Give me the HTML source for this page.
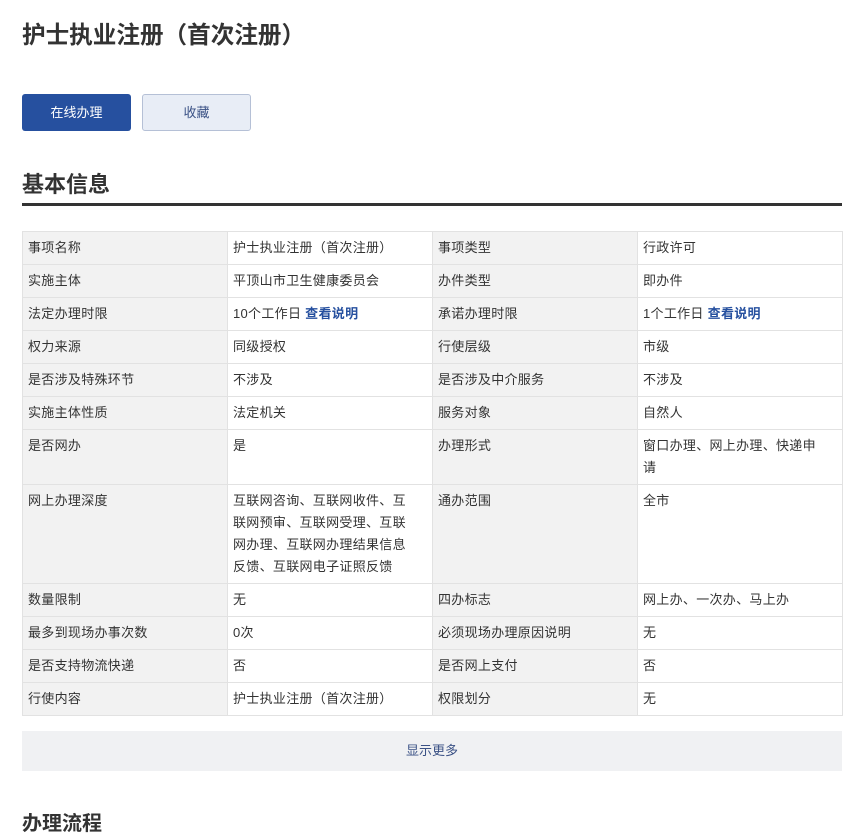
<!DOCTYPE html>
<html><head><meta charset="utf-8"><style>
body{margin:0;background:#fff;font-family:"Liberation Sans","Noto Sans CJK SC",sans-serif;color:#333;width:868px;height:814px;overflow:hidden;position:relative}
h1{position:absolute;left:22px;top:19px;margin:0;font-size:23.6px;font-weight:bold;color:#333;line-height:34px}
.btn{position:absolute;top:94px;height:37px;width:109px;box-sizing:border-box;border-radius:3px;font-size:13px;text-align:center;line-height:37px}
.b1{left:22px;background:#26509f;color:#fff}
.b2{left:142px;background:#e8edf6;border:1px solid #b5c0d6;color:#3a5185;line-height:35px}
h2{position:absolute;left:22px;top:168px;margin:0;font-size:22px;font-weight:bold;line-height:34px;color:#333}
.line{position:absolute;left:22px;top:203px;width:820px;height:3px;background:#333}
table{position:absolute;left:22px;top:231px;width:820px;border-collapse:collapse;table-layout:fixed;font-size:13px;letter-spacing:0.3px}
td{border:1px solid #e2e2e2;padding:5px 20px 5px 5px;line-height:22px;vertical-align:top;color:#333}
td.l{background:#f2f2f2}
a{color:#26509f;font-weight:bold;text-decoration:none}
.more{position:absolute;left:22px;top:731px;width:820px;height:40px;background:#f0f1f3;text-align:center;line-height:40px;font-size:13px;color:#3a5185}
.h3{position:absolute;left:22px;top:812px;font-size:20px;font-weight:bold;color:#333;line-height:24px}
</style></head><body>
<h1>护士执业注册（首次注册）</h1>
<div class="btn b1">在线办理</div>
<div class="btn b2">收藏</div>
<h2>基本信息</h2>
<div class="line"></div>
<table>
<colgroup><col style="width:205px"><col style="width:205px"><col style="width:205px"><col style="width:205px"></colgroup>
<tr><td class="l">事项名称</td><td>护士执业注册（首次注册）</td><td class="l">事项类型</td><td>行政许可</td></tr>
<tr><td class="l">实施主体</td><td>平顶山市卫生健康委员会</td><td class="l">办件类型</td><td>即办件</td></tr>
<tr><td class="l">法定办理时限</td><td>10个工作日 <a>查看说明</a></td><td class="l">承诺办理时限</td><td>1个工作日 <a>查看说明</a></td></tr>
<tr><td class="l">权力来源</td><td>同级授权</td><td class="l">行使层级</td><td>市级</td></tr>
<tr><td class="l">是否涉及特殊环节</td><td>不涉及</td><td class="l">是否涉及中介服务</td><td>不涉及</td></tr>
<tr><td class="l">实施主体性质</td><td>法定机关</td><td class="l">服务对象</td><td>自然人</td></tr>
<tr><td class="l">是否网办</td><td>是</td><td class="l">办理形式</td><td>窗口办理、网上办理、快递申请</td></tr>
<tr><td class="l">网上办理深度</td><td>互联网咨询、互联网收件、互联网预审、互联网受理、互联网办理、互联网办理结果信息反馈、互联网电子证照反馈</td><td class="l">通办范围</td><td>全市</td></tr>
<tr><td class="l">数量限制</td><td>无</td><td class="l">四办标志</td><td>网上办、一次办、马上办</td></tr>
<tr><td class="l">最多到现场办事次数</td><td>0次</td><td class="l">必须现场办理原因说明</td><td>无</td></tr>
<tr><td class="l">是否支持物流快递</td><td>否</td><td class="l">是否网上支付</td><td>否</td></tr>
<tr><td class="l">行使内容</td><td>护士执业注册（首次注册）</td><td class="l">权限划分</td><td>无</td></tr>
</table>
<div class="more">显示更多</div>
<div class="h3">办理流程</div>
</body></html>
